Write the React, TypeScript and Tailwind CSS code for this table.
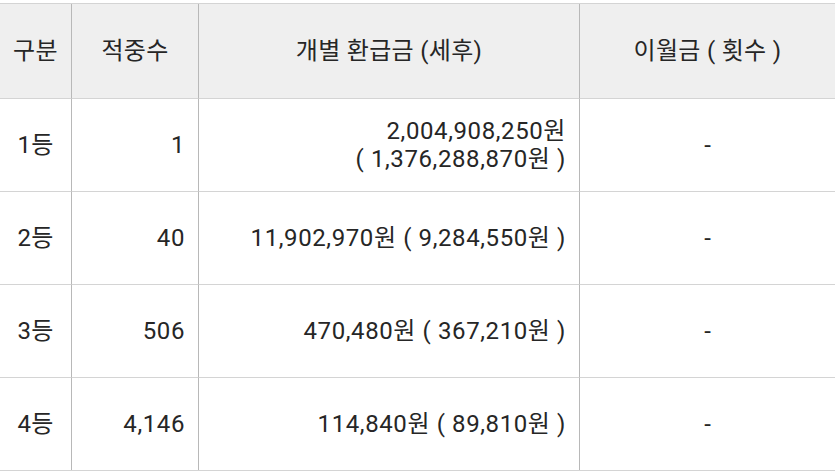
import React from "react";

const rows = [
  { rank: "1등", count: "1", amount: ["2,004,908,250원", "( 1,376,288,870원 )"] },
  { rank: "2등", count: "40", amount: ["11,902,970원 ( 9,284,550원 )"] },
  { rank: "3등", count: "506", amount: ["470,480원 ( 367,210원 )"] },
  { rank: "4등", count: "4,146", amount: ["114,840원 ( 89,810원 )"] },
];

export default function App() {
  return (
    <div
      className="w-[835px] h-[474px] bg-white pt-[3px] overflow-hidden text-[#262626]"
      style={{ fontFamily: 'Roboto, "Noto Sans CJK KR", sans-serif' }}
    >
      <div className="grid grid-cols-[71px_127px_381px_256px] border-t border-b border-[#d4d4d4] text-[24px] leading-[28px]">
        <div className="h-[94px] bg-[#efefef] flex items-center justify-center tracking-[0.3px]">구분</div>
        <div className="h-[94px] bg-[#efefef] flex items-center justify-center border-l border-[#b8b8b8] tracking-[0.3px]">적중수</div>
        <div className="h-[94px] bg-[#efefef] flex items-center justify-center border-l border-[#b8b8b8] tracking-[0.3px]">개별 환급금 (세후)</div>
        <div className="h-[94px] bg-[#efefef] flex items-center justify-center border-l border-[#b8b8b8] tracking-[0.3px]">이월금 ( 횟수 )</div>
        {rows.map((r) => (
          <React.Fragment key={r.rank}>
            <div className="h-[93px] border-t border-[#d4d4d4] flex items-center justify-center tracking-[0.3px]">{r.rank}</div>
            <div className="h-[93px] border-t border-l border-t-[#d4d4d4] border-l-[#b8b8b8] flex items-center justify-end pr-[13px] tracking-[0.6px]">{r.count}</div>
            <div className="h-[93px] border-t border-l border-t-[#d4d4d4] border-l-[#b8b8b8] flex flex-col items-end justify-center pr-[13px] tracking-[0.6px]">
              {r.amount.map((a) => (
                <div key={a} className="whitespace-pre">{a}</div>
              ))}
            </div>
            <div className="h-[93px] border-t border-l border-t-[#d4d4d4] border-l-[#b8b8b8] flex items-center justify-center">-</div>
          </React.Fragment>
        ))}
      </div>
    </div>
  );
}
